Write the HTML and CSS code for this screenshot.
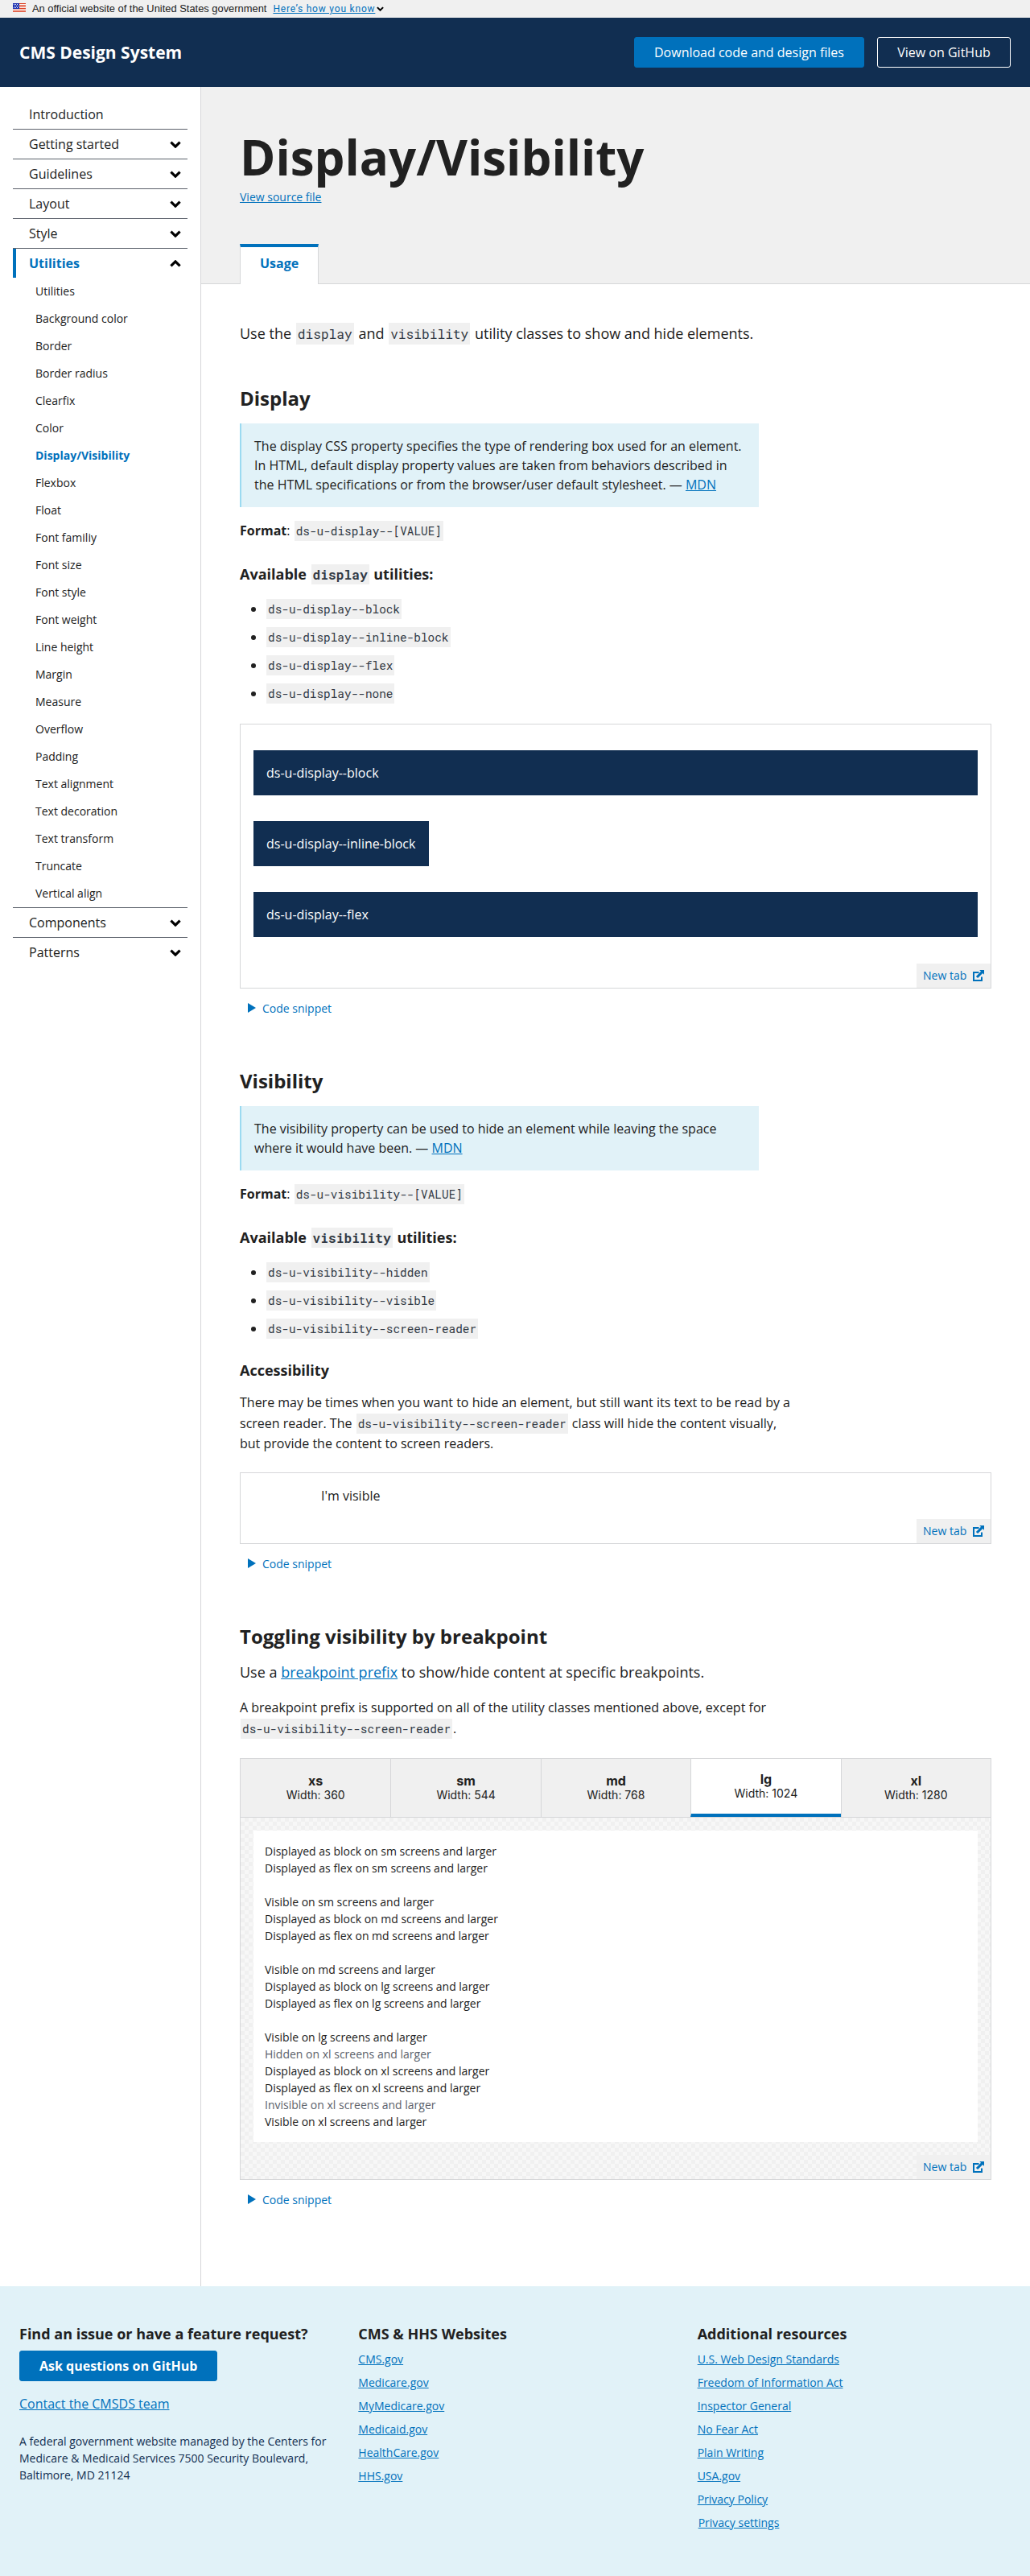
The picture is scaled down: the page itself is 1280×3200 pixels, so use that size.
FILE: index.html
```html
<!DOCTYPE html>
<html lang="en">
<head>
<meta charset="utf-8">
<title>Display/Visibility - CMS Design System</title>
<link rel="stylesheet" href="styles.css">
</head>
<body>
<svg width="0" height="0" class="sprite" aria-hidden="true">
  <symbol id="chevron" viewBox="0 0 14 9"><path d="M1.4 1.6 7 7.1l5.6-5.5" fill="none" stroke="#000" stroke-width="3.2"/></symbol>
  <symbol id="external" viewBox="0 0 14 14"><path d="M7.5 3H1v10h10V8.5" fill="none" stroke="#0071bc" stroke-width="2"/><path d="M8.2 0H14v5.8l-1.8-1.8-6.1 6.1-2.2-2.2L10 1.8z" fill="#0071bc"/></symbol>
</svg>

<div class="gov-banner">
  <svg class="flag" viewBox="0 0 16 11"><rect width="16" height="11" fill="#fff"/><path d="M0 .5h16M0 2.5h16M0 4.5h16M0 6.5h16M0 8.5h16M0 10.5h16" stroke="#db3e1f"/><rect width="8" height="7" fill="#1e33b1"/><path d="M1 1.5h6M2 3.5h6M1 5.5h6" stroke="#fff" stroke-dasharray="1 1"/></svg>
  <span class="gov-text">An official website of the United States government</span>
  <a class="gov-link" href="#">Here’s how you know</a>
  <svg class="gov-chevron"><use href="#chevron"/></svg>
</div>

<header class="site-header">
  <span class="site-title">CMS Design System</span>
  <div class="header-actions">
    <a class="button button--primary" href="#">Download code and design files</a>
    <a class="button button--outline" href="#">View on GitHub</a>
  </div>
</header>

<div class="layout">
  <nav class="sidebar">
    <a class="nav-item" href="#">Introduction</a>
    <a class="nav-item" href="#">Getting started<svg><use href="#chevron"/></svg></a>
    <a class="nav-item" href="#">Guidelines<svg><use href="#chevron"/></svg></a>
    <a class="nav-item" href="#">Layout<svg><use href="#chevron"/></svg></a>
    <a class="nav-item" href="#">Style<svg><use href="#chevron"/></svg></a>
    <a class="nav-item nav-item--open" href="#">Utilities<svg><use href="#chevron"/></svg></a>
    <div class="subnav">
      <a href="#">Utilities</a>
      <a href="#">Background color</a>
      <a href="#">Border</a>
      <a href="#">Border radius</a>
      <a href="#">Clearfix</a>
      <a href="#">Color</a>
      <a class="current" href="#">Display/Visibility</a>
      <a href="#">Flexbox</a>
      <a href="#">Float</a>
      <a href="#">Font familiy</a>
      <a href="#">Font size</a>
      <a href="#">Font style</a>
      <a href="#">Font weight</a>
      <a href="#">Line height</a>
      <a href="#">Margin</a>
      <a href="#">Measure</a>
      <a href="#">Overflow</a>
      <a href="#">Padding</a>
      <a href="#">Text alignment</a>
      <a href="#">Text decoration</a>
      <a href="#">Text transform</a>
      <a href="#">Truncate</a>
      <a href="#">Vertical align</a>
    </div>
    <a class="nav-item nav-item--ruled" href="#">Components<svg><use href="#chevron"/></svg></a>
    <a class="nav-item nav-item--last" href="#">Patterns<svg><use href="#chevron"/></svg></a>
  </nav>

  <main class="main">
    <div class="page-header">
      <h1>Display/Visibility</h1>
      <a class="source-link" href="#">View source file</a>
      <div class="tabs"><span class="tab">Usage</span></div>
    </div>

    <div class="content">
      <p class="lead">Use the <code>display</code> and <code>visibility</code> utility classes to show and hide elements.</p>

      <h2>Display</h2>
      <blockquote class="callout">The display CSS property specifies the type of rendering box used for an element. In HTML, default display property values are taken from behaviors described in the HTML specifications or from the browser/user default stylesheet. — <a href="#">MDN</a></blockquote>
      <p class="format"><b>Format</b>: <code>ds-u-display--[VALUE]</code></p>
      <h3 class="available">Available <code>display</code> utilities:</h3>
      <ul class="class-list">
        <li><code>ds-u-display--block</code></li>
        <li><code>ds-u-display--inline-block</code></li>
        <li><code>ds-u-display--flex</code></li>
        <li><code>ds-u-display--none</code></li>
      </ul>
      <div class="example example--display">
        <div class="bars">
          <div class="bar">ds-u-display--block</div>
          <div class="bar bar--inline">ds-u-display--inline-block</div>
          <div class="bar">ds-u-display--flex</div>
        </div>
        <a class="new-tab" href="#"><span>New tab</span><svg><use href="#external"/></svg></a>
      </div>
      <a class="snippet" href="#"><span class="triangle"></span>Code snippet</a>

      <h2 class="section">Visibility</h2>
      <blockquote class="callout">The visibility property can be used to hide an element while leaving the space where it would have been. — <a href="#">MDN</a></blockquote>
      <p class="format"><b>Format</b>: <code>ds-u-visibility--[VALUE]</code></p>
      <h3 class="available">Available <code>visibility</code> utilities:</h3>
      <ul class="class-list">
        <li><code>ds-u-visibility--hidden</code></li>
        <li><code>ds-u-visibility--visible</code></li>
        <li><code>ds-u-visibility--screen-reader</code></li>
      </ul>
      <h3 class="accessibility">Accessibility</h3>
      <p class="text">There may be times when you want to hide an element, but still want its text to be read by a screen reader. The <code>ds-u-visibility--screen-reader</code> class will hide the content visually, but provide the content to screen readers.</p>
      <div class="example example--visibility">
        <div class="visible-text">I'm visible</div>
        <a class="new-tab" href="#"><span>New tab</span><svg><use href="#external"/></svg></a>
      </div>
      <a class="snippet" href="#"><span class="triangle"></span>Code snippet</a>

      <h2 class="section">Toggling visibility by breakpoint</h2>
      <p class="lead lead--sub">Use a <a href="#">breakpoint prefix</a> to show/hide content at specific breakpoints.</p>
      <p class="text text--prefix">A breakpoint prefix is supported on all of the utility classes mentioned above, except for <code>ds-u-visibility--screen-reader</code>.</p>

      <div class="responsive">
        <div class="sizes">
          <div class="size"><b>xs</b><span>Width: 360</span></div>
          <div class="size"><b>sm</b><span>Width: 544</span></div>
          <div class="size"><b>md</b><span>Width: 768</span></div>
          <div class="size size--active"><b>lg</b><span>Width: 1024</span></div>
          <div class="size"><b>xl</b><span>Width: 1280</span></div>
        </div>
        <div class="checker">
          <div class="preview">
            <div>Displayed as block on sm screens and larger</div>
            <div>Displayed as flex on sm screens and larger</div>
            <div class="gap">Visible on sm screens and larger</div>
            <div>Displayed as block on md screens and larger</div>
            <div>Displayed as flex on md screens and larger</div>
            <div class="gap">Visible on md screens and larger</div>
            <div>Displayed as block on lg screens and larger</div>
            <div>Displayed as flex on lg screens and larger</div>
            <div class="gap">Visible on lg screens and larger</div>
            <div class="muted">Hidden on xl screens and larger</div>
            <div>Displayed as block on xl screens and larger</div>
            <div>Displayed as flex on xl screens and larger</div>
            <div class="muted">Invisible on xl screens and larger</div>
            <div>Visible on xl screens and larger</div>
          </div>
          <a class="new-tab" href="#"><span>New tab</span><svg><use href="#external"/></svg></a>
        </div>
      </div>
      <a class="snippet" href="#"><span class="triangle"></span>Code snippet</a>
    </div>
  </main>
</div>

<footer class="footer">
  <div class="footer-col">
    <h3>Find an issue or have a feature request?</h3>
    <a class="button button--primary button--ask" href="#">Ask questions on GitHub</a>
    <a class="contact" href="#">Contact the CMSDS team</a>
    <p class="address">A federal government website managed by the Centers for Medicare &amp; Medicaid Services 7500 Security Boulevard, Baltimore, MD 21124</p>
  </div>
  <div class="footer-col">
    <h3>CMS &amp; HHS Websites</h3>
    <ul>
      <li><a href="#">CMS.gov</a></li>
      <li><a href="#">Medicare.gov</a></li>
      <li><a href="#">MyMedicare.gov</a></li>
      <li><a href="#">Medicaid.gov</a></li>
      <li><a href="#">HealthCare.gov</a></li>
      <li><a href="#">HHS.gov</a></li>
    </ul>
  </div>
  <div class="footer-col">
    <h3>Additional resources</h3>
    <ul>
      <li><a href="#">U.S. Web Design Standards</a></li>
      <li><a href="#">Freedom of Information Act</a></li>
      <li><a href="#">Inspector General</a></li>
      <li><a href="#">No Fear Act</a></li>
      <li><a href="#">Plain Writing</a></li>
      <li><a href="#">USA.gov</a></li>
      <li><a href="#">Privacy Policy</a></li>
      <li class="settings"><a href="#">Privacy settings</a></li>
    </ul>
  </div>
</footer>
</body>
</html>
```
FILE: styles.css
```css
* { box-sizing: border-box; }

body {
  margin: 0;
  color: #212121;
  background: #fff;
  font: 16px/24px "Open Sans", sans-serif;
}

h1, h2, h3, p, ul, blockquote { margin: 0; padding: 0; }
a { color: #0071bc; }
svg { display: block; flex: none; }
.sprite { position: absolute; }

/* Government banner */
.gov-banner {
  display: flex;
  align-items: center;
  height: 22px;
  padding-left: 16px;
  background: #f0f0f0;
  font: 12px/22px "Liberation Sans", sans-serif;
}
.flag { width: 16px; height: 11px; margin: 0 8px 3px 0; }
.gov-text { font-size: 12.9px; }
.gov-link { margin-left: 8px; font-family: Roboto, sans-serif; letter-spacing: 0.8px; }
.gov-chevron { width: 9px; height: 6px; margin-left: 2px; }

/* Site header */
.site-header {
  display: flex;
  align-items: center;
  justify-content: space-between;
  height: 86px;
  padding: 0 24px;
  background: #112e51;
}
.site-title { color: #fff; font-size: 21px; font-weight: 700; }
.header-actions { display: flex; gap: 16px; }
.button {
  display: block;
  padding: 6px 24px;
  border: 1px solid #0071bc;
  border-radius: 3px;
  color: #fff;
  text-align: center;
  text-decoration: none;
  white-space: nowrap;
}
.button--primary { background: #0071bc; }
.button--outline { border-color: #fff; }
.site-header .button { font-weight: 500; }
.site-header .button--primary { min-width: 286px; }
.site-header .button--outline { min-width: 166px; }

.layout { display: flex; height: 2732px; }

/* Sidebar */
.sidebar {
  width: 250px;
  padding: 16px 16px 0;
  border-right: 1px solid #d6d7d9;
}
.nav-item {
  display: flex;
  align-items: center;
  justify-content: space-between;
  height: 37px;
  padding: 0 8px 0 20px;
  border-bottom: 1px solid #5b616b;
  color: #212121;
  line-height: 36px;
  text-decoration: none;
}
.nav-item svg { width: 14px; height: 9px; }
.nav-item--open {
  height: 36px;
  padding-left: 16px;
  border-left: 4px solid #0071bc;
  border-bottom: 0;
  color: #0071bc;
  font-weight: 700;
}
.nav-item--open svg { transform: rotate(180deg); }
.nav-item--ruled { height: 38px; border-top: 1px solid #5b616b; }
.nav-item--last { border-bottom: 0; height: 36px; }
.subnav a {
  display: block;
  padding-left: 28px;
  color: #212121;
  font-size: 14px;
  line-height: 34px;
  text-decoration: none;
}
.subnav .current { color: #0071bc; font-weight: 700; }

/* Page heading */
.main { flex: 1; min-width: 0; }
.page-header {
  height: 245px;
  padding: 51px 48px 0;
  border-bottom: 1px solid #d6d7d9;
  background: #f0f0f0;
}
h1 { margin-bottom: 3px; font-size: 60px; line-height: 72px; }
.source-link { display: block; font-size: 14px; line-height: 21px; }
.tabs { display: flex; margin-top: 48px; }
.tab {
  height: 50px;
  padding: 8px 24px 0;
  border: 1px solid #d6d7d9;
  border-top: 4px solid #0071bc;
  border-bottom: 0;
  background: #fff;
  color: #0071bc;
  font-weight: 700;
}

/* Article */
.content { padding: 48px 48px 0; }
.lead { font-size: 18px; line-height: 27px; }
h2 { margin: 51px 0 16px; font-size: 24px; line-height: 31px; }
h2.section { margin-top: 64px; }
h3 { font-size: 18px; line-height: 24px; }
code {
  margin: 0 1px;
  padding: 3px 2px;
  background: #f0f0f0;
  color: #323a45;
  font-family: "Roboto Mono", "Liberation Mono", monospace;
  font-size: 0.9em;
  line-height: 1;
  white-space: nowrap;
}
h3 code { padding: 2px; }
.callout {
  width: 645px;
  padding: 16px;
  border-left: 2px solid #9bdaf1;
  background: #e1f2f8;
}
.format { margin-top: 17px; }
.available { margin-top: 30px; }
.class-list { margin-top: 19px; padding-left: 32px; }
.class-list li { margin-bottom: 10px; line-height: 25px; }
.class-list li:last-child { margin-bottom: 0; }
.accessibility { margin-top: 27px; }
.text { width: 690px; margin-top: 16px; line-height: 25.5px; }

/* Examples */
.example {
  display: flex;
  flex-direction: column;
  justify-content: space-between;
  border: 1px solid #d6d7d9;
}
.example--display { height: 329px; margin-top: 25px; padding-top: 32px; }
.bars { display: flex; flex-direction: column; gap: 32px; padding: 0 16px; }
.bar { padding: 16px; background: #112e51; color: #fff; font-weight: 500; }
.bar--inline { align-self: flex-start; min-width: 218px; }
.example--visibility { height: 89px; margin-top: 22.5px; padding-top: 16px; }
.visible-text { padding-left: 100px; }
.new-tab {
  display: flex;
  align-items: center;
  align-self: flex-end;
  justify-content: space-between;
  width: 92px;
  height: 30px;
  padding: 0 8px;
  background: #f0f0f0;
  font-size: 14px;
  line-height: 21px;
  text-decoration: none;
}
.new-tab span { padding-bottom: 2px; }
.new-tab svg { width: 14px; height: 14px; }
.snippet {
  display: flex;
  gap: 8px;
  width: 120px;
  margin-top: 14px;
  padding-left: 10px;
  font-size: 14px;
  line-height: 21px;
  text-decoration: none;
}
.triangle {
  width: 10px;
  height: 12px;
  margin-top: 4px;
  background: #0071bc;
  clip-path: polygon(0 0, 100% 50%, 0 100%);
}

/* Breakpoint preview */
.lead--sub { margin-top: 15.5px; }
.text--prefix { margin-top: 18px; }
.responsive { margin-top: 24px; border: 1px solid #d6d7d9; }
.sizes { display: grid; grid-template-columns: repeat(5, 1fr); border-bottom: 1px solid #d6d7d9; }
.size {
  display: flex;
  flex-direction: column;
  justify-content: center;
  height: 72px;
  border-left: 1px solid #d6d7d9;
  background: #f0f0f0;
  font-family: Inter, sans-serif;
  font-size: 14px;
  line-height: 18px;
  text-align: center;
}
.size:first-child { border-left: 0; }
.size b { font-size: 16px; }
.size--active { border-bottom: 4px solid #0071bc; background: #fff; }
.checker {
  display: flex;
  flex-direction: column;
  padding-top: 16px;
  background: repeating-conic-gradient(#f0f0f0 0 25%, #f7f7f7 0 50%) 0 0 / 10px 10px;
}
.preview {
  height: 387px;
  margin: 0 16px 16px;
  padding: 15px 14px 14px;
  background: #fff;
  font-size: 14px;
  line-height: 21px;
}
.gap { margin-top: 21px; }
.muted { color: #5b616b; }

/* Footer */
.footer {
  display: grid;
  grid-template-columns: repeat(3, 1fr);
  height: 360px;
  padding: 47px 8px 0;
  background: #e1f2f8;
}
.footer-col { padding: 0 16px; }
.footer ul { margin-top: 5px; font-size: 14px; list-style: none; }
.footer li { line-height: 29px; }
.settings { padding-left: 1px; }
.button--ask { width: fit-content; margin-top: 9px; font-weight: 700; }
.contact { display: block; margin-top: 16px; }
.address { margin-top: 24px; color: #112e51; font-size: 14px; line-height: 21px; }
```
